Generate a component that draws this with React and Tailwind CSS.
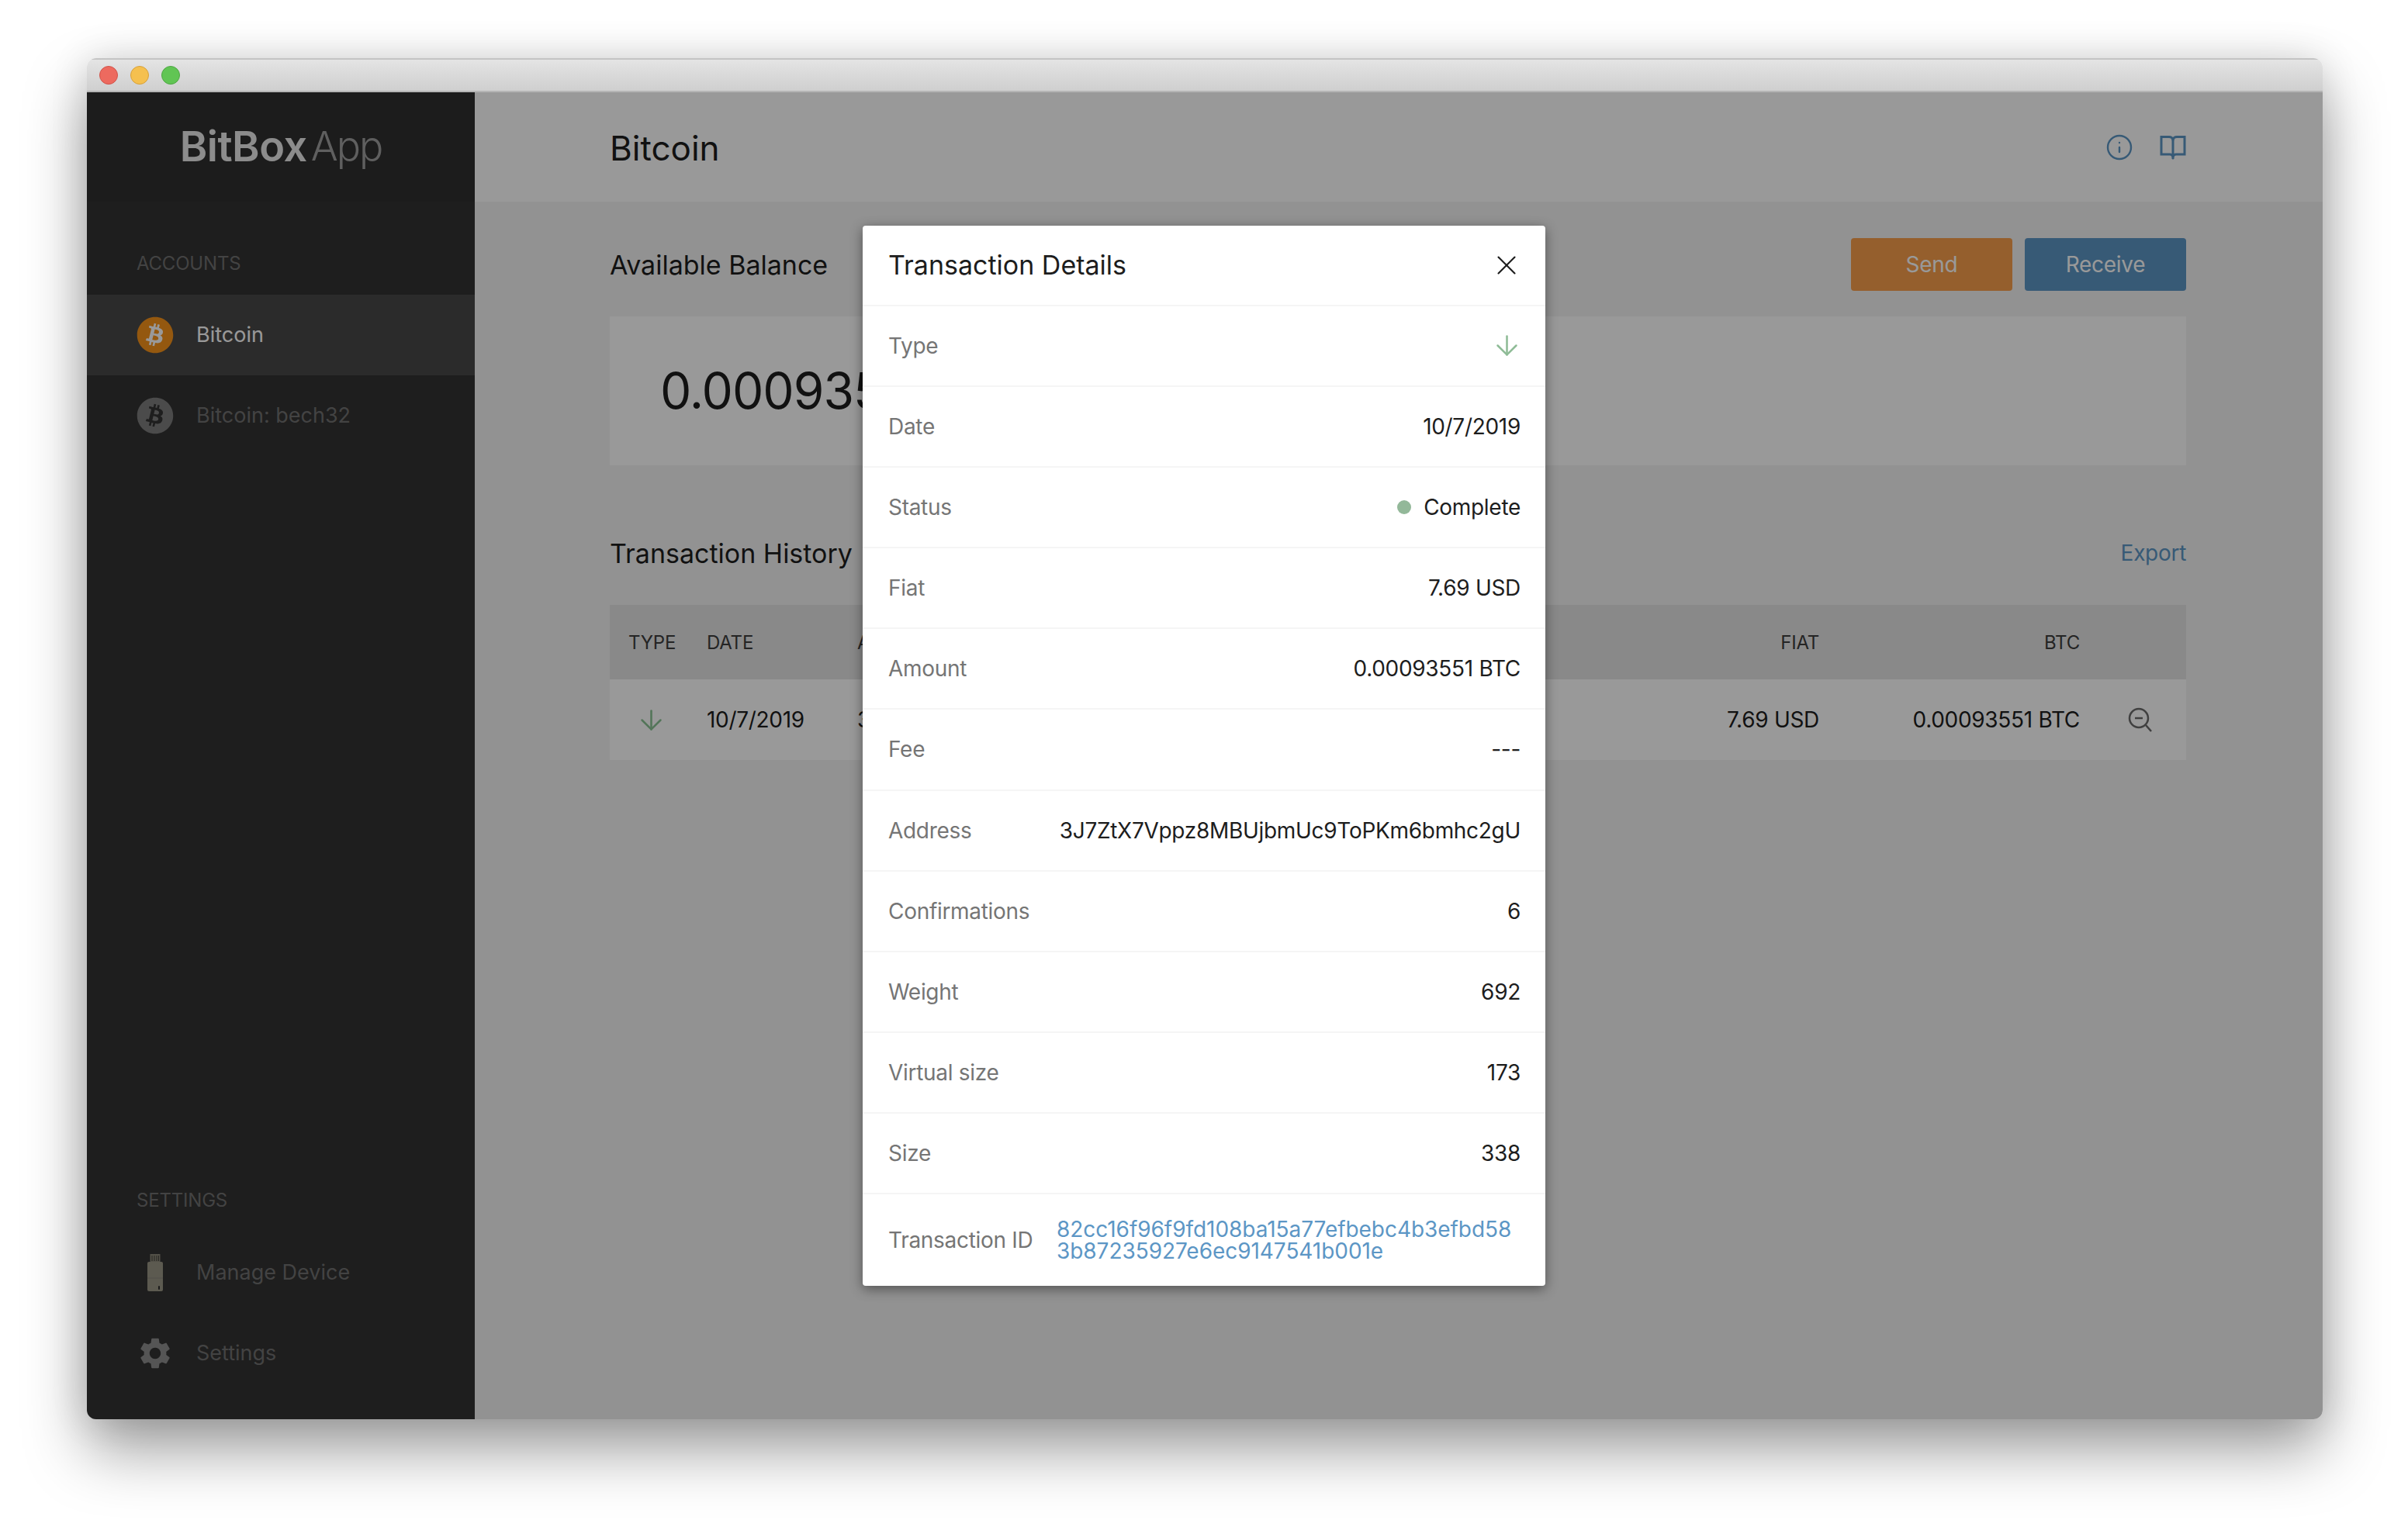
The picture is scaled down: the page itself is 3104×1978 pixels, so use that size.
import { Info, X, ArrowDown } from "lucide-react";
import { FaBitcoin } from "react-icons/fa";
import { MdSettings } from "react-icons/md";

const details = [
  { label: "Date", value: "10/7/2019" },
  { label: "Status", value: "Complete", dot: true },
  { label: "Fiat", value: "7.69 USD" },
  { label: "Amount", value: "0.00093551 BTC" },
  { label: "Fee", value: "---" },
  { label: "Address", value: "3J7ZtX7Vppz8MBUjbmUc9ToPKm6bmhc2gU" },
  { label: "Confirmations", value: "6" },
  { label: "Weight", value: "692" },
  { label: "Virtual size", value: "173" },
  { label: "Size", value: "338" },
];

function CoinIcon({ active }) {
  return (
    <div className="relative w-12 h-12 shrink-0">
      {active && <div className="absolute inset-[6px] rounded-full bg-white" />}
      <FaBitcoin className={`relative w-12 h-12 ${active ? "text-[#f7931a]" : "text-[#7d7d7d]"}`} />
    </div>
  );
}

function UsbIcon() {
  return (
    <svg width="48" height="50" viewBox="0 0 48 50" className="shrink-0">
      <rect x="17.5" y="1" width="13" height="11" fill="#8a8778" />
      <path d="M20 3v7M23 3v7M26 3v7M28.5 3v7" stroke="#3f3e38" strokeWidth="1" />
      <rect x="14" y="11" width="20" height="38" rx="2" fill="#9a9685" />
      <path d="M14 32h20" stroke="#86837a" strokeWidth="1" />
      <rect x="28" y="42" width="2" height="5" rx="1" fill="#2b2b2b" />
    </svg>
  );
}

function BookIcon() {
  return (
    <svg width="34" height="32" viewBox="0 0 34 32" fill="none" stroke="#5c96c5" strokeWidth="3">
      <path d="M2 2.500H12Q16 2.500 17 6Q18 2.500 22 2.500H32V25H21Q18 25 17 28Q16 25 13 25H2Z" />
      <path d="M17 6V31" />
    </svg>
  );
}

function ZoomOutIcon() {
  return (
    <svg width="32" height="32" viewBox="0 0 32 32" fill="none" stroke="#6b6b6b" strokeWidth="2.500">
      <circle cx="14" cy="14" r="12" />
      <path d="M9 14h10" />
      <path d="M23 23l7 8" />
    </svg>
  );
}

function NavRow({ icon, label, active }) {
  return (
    <div className={`flex items-center h-[104px] pl-16 gap-[29px] text-[27px] ${active ? "bg-[#494949] text-white" : "text-[#717171]"}`}>
      {icon}
      <span>{label}</span>
    </div>
  );
}

function Sidebar() {
  return (
    <aside className="w-[500px] shrink-0 bg-[#323232] flex flex-col">
      <div className="h-[141px] flex items-center justify-center pb-[2px] bg-[#2f2f2f]">
        <span className="text-[54px] font-semibold tracking-[-0.5px] text-[#eaeaea]">BitBox</span>
        <span className="text-[52px] font-light tracking-[-2px] text-[#9f9f9f] ml-[5px]">App</span>
      </div>
      <div className="mt-[59px] mb-[19px] pl-16 text-[24px] tracking-[-0.2px] leading-[42px] text-[#717171]">ACCOUNTS</div>
      <NavRow active icon={<CoinIcon active />} label="Bitcoin" />
      <NavRow icon={<CoinIcon />} label="Bitcoin: bech32" />
      <div className="mt-auto pl-16 text-[24px] tracking-[-0.2px] leading-[42px] text-[#717171]">SETTINGS</div>
      <div className="mt-[20px] mb-[33px]">
        <NavRow icon={<UsbIcon />} label="Manage Device" />
        <NavRow icon={<MdSettings className="w-12 h-12 shrink-0 text-[#8e8e8e]" />} label="Settings" />
      </div>
    </aside>
  );
}

function Main() {
  return (
    <main className="flex-1 bg-[#f4f4f4] flex flex-col min-w-0">
      <header className="h-[141px] bg-white flex items-center justify-between pl-[174px] pr-[176px]">
        <h1 className="text-[44px] pt-[3px] text-[#1d1d1d]">Bitcoin</h1>
        <div className="flex items-center gap-[34px]">
          <Info className="w-[36px] h-[36px] text-[#5c96c5]" strokeWidth={1.6} />
          <BookIcon />
        </div>
      </header>
      <div className="pl-[174px] pr-[176px]">
        <div className="flex items-center justify-between mt-[47px] h-[68px]">
          <h2 className="text-[34px] text-[#1d1d1d]">Available Balance</h2>
          <div className="flex gap-4">
            <button className="w-[208px] h-[68px] rounded bg-[#f89f4c] text-white text-[28px] tracking-[-0.3px]">Send</button>
            <button className="w-[208px] h-[68px] rounded bg-[#5c96c5] text-white text-[28px] tracking-[-0.3px]">Receive</button>
          </div>
        </div>
        <div className="mt-[33px] h-[192px] bg-white flex items-center pl-[65px] text-[64px] tracking-[-1px] text-[#1d1d1d]">
          0.00093551 BTC
        </div>
        <div className="flex items-center justify-between mt-[83px] h-[60px]">
          <h2 className="text-[34px] text-[#1d1d1d]">Transaction History</h2>
          <span className="text-[28px] tracking-[-0.3px] text-[#5c96c5]">Export</span>
        </div>
        <div className="mt-[37px] h-[96px] pt-[2px] bg-[#e4e4e4] grid grid-cols-[125px_194px_1fr_240px_336px_137px] items-center text-[24px] tracking-[-0.2px] text-[#3d3d3d]">
          <span className="pl-6">TYPE</span>
          <span>DATE</span>
          <span>ADDRESS</span>
          <span className="text-right">FIAT</span>
          <span className="text-right">BTC</span>
          <span />
        </div>
        <div className="h-[104px] bg-white grid grid-cols-[125px_194px_1fr_240px_336px_137px] items-center text-[28px] tracking-[-0.3px] text-[#1d1d1d]">
          <span className="pl-[33px]"><ArrowDown className="w-[41px] h-[41px] text-[#8ac394]" strokeWidth={1.5} /></span>
          <span>10/7/2019</span>
          <span>3J7ZtX7Vppz8MBUjbmUc9ToPKm6bmhc2gU</span>
          <span className="text-right">7.69 USD</span>
          <span className="text-right">0.00093551 BTC</span>
          <span className="pl-[62px]"><ZoomOutIcon /></span>
        </div>
      </div>
    </main>
  );
}

function DetailRow({ label, children }) {
  return (
    <div className="flex items-center justify-between h-[104.18px] pl-[33px] pr-[32px] border-t-2 border-[#f5f5f5] text-[28px] tracking-[-0.3px]">
      <span className="text-[#757575]">{label}</span>
      {children}
    </div>
  );
}

function Modal() {
  return (
    <div className="w-[880px] bg-white rounded shadow-[0_4px_16px_rgba(0,0,0,0.45)] text-[#1d1d1d]">
      <div className="flex items-center justify-between h-[102px] pl-[33px] pr-[29px]">
        <h3 className="text-[34px]">Transaction Details</h3>
        <X className="w-[42px] h-[42px] text-[#1d1d1d]" strokeWidth={1.2} />
      </div>
      <DetailRow label="Type">
        <ArrowDown className="w-[41px] h-[41px] -mr-[3px] text-[#8fbc97]" strokeWidth={1.5} />
      </DetailRow>
      {details.map((d) => (
        <DetailRow key={d.label} label={d.label}>
          <span className="flex items-center gap-4">
            {d.dot && <span className="w-[18px] h-[18px] rounded-full bg-[#93b899]" />}
            {d.value}
          </span>
        </DetailRow>
      ))}
      <div className="flex items-center h-[120px] pl-[33px] border-t-2 border-[#f5f5f5] text-[28px] tracking-[-0.3px]">
        <span className="text-[#757575] w-[217px] shrink-0">Transaction ID</span>
        <span className="w-[596px] break-all tracking-[-0.05px] leading-[28.500px] text-[#5c96c5]">
          82cc16f96f9fd108ba15a77efbebc4b3efbd58
          <br />
          3b87235927e6ec9147541b001e
        </span>
      </div>
    </div>
  );
}

export default function App() {
  return (
    <div className="w-[3104px] h-[1978px] bg-white pl-[112px] pt-[75px] font-['Inter',sans-serif] overflow-hidden">
      <div className="w-[2882px] h-[1755px] rounded-xl shadow-[0_40px_80px_rgba(0,0,0,0.38),0_0_50px_rgba(0,0,0,0.12)] flex flex-col overflow-hidden">
        <div className="h-[44px] shrink-0 bg-linear-to-b from-[#e4e4e4] to-[#cfcfcf] border-t-2 border-b-2 border-t-[#c4c4c4] border-b-[#b5b5b5] flex items-center pl-[16px] gap-4">
          <span className="w-6 h-6 rounded-full bg-[#ed6a5f] border border-[#d0534a]" />
          <span className="w-6 h-6 rounded-full bg-[#f5c04f] border border-[#d6a03c]" />
          <span className="w-6 h-6 rounded-full bg-[#61c554] border border-[#4fa645]" />
        </div>
        <div className="relative flex-1 flex min-h-0">
          <Sidebar />
          <Main />
          <div className="absolute inset-0 bg-black/40 flex items-center justify-center pr-[2px]">
            <Modal />
          </div>
        </div>
      </div>
    </div>
  );
}
